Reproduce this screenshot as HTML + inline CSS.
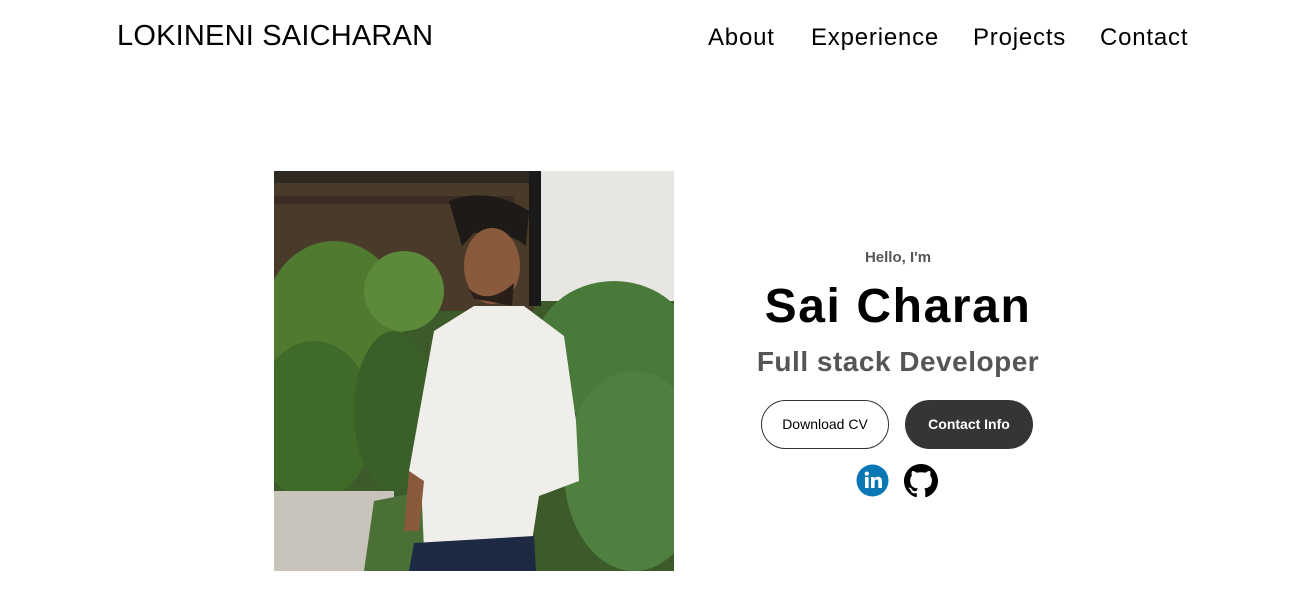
<!DOCTYPE html>
<html><head><meta charset="utf-8"><style>
*{margin:0;padding:0;box-sizing:border-box}
body{width:1313px;height:602px;background:#fff;font-family:"Liberation Sans",sans-serif;position:relative;overflow:hidden}
.logo{position:absolute;left:117px;top:20px;font-size:29px;color:#000;letter-spacing:0.2px}
.nav{position:absolute;top:24px;font-size:24px;color:#000;letter-spacing:0.8px}
.hello{position:absolute;left:0;width:1796px;top:249px;text-align:center;font-size:15px;font-weight:bold;color:#555}
.name{position:absolute;left:0;width:1796px;top:279px;text-align:center;font-size:48px;font-weight:bold;color:#000;letter-spacing:1.6px}
.role{position:absolute;left:0;width:1796px;top:346px;text-align:center;font-size:28px;font-weight:bold;color:#555;letter-spacing:0.5px}
.btn{position:absolute;top:400px;width:128px;height:49px;border-radius:25px;font-size:14px;font-weight:bold;text-align:center;line-height:49px}
</style></head><body>
<div class="logo">LOKINENI SAICHARAN</div>
<div class="nav" style="left:708px">About</div>
<div class="nav" style="left:811px">Experience</div>
<div class="nav" style="left:973px">Projects</div>
<div class="nav" style="left:1100px">Contact</div>

<svg style="position:absolute;left:274px;top:171px" width="400" height="400" viewBox="0 0 400 400">
<rect width="400" height="400" fill="#3d5a2a"/>
<rect x="0" y="0" width="260" height="140" fill="#4a3a2a"/>
<rect x="0" y="0" width="260" height="12" fill="#2e2a22"/>
<rect x="0" y="25" width="240" height="8" fill="#3a2e22"/>
<rect x="260" y="0" width="140" height="130" fill="#e8e6e2"/>
<rect x="255" y="0" width="12" height="135" fill="#1a1a1a"/>
<circle cx="73" cy="82" r="9" fill="#e9a030"/>
<ellipse cx="60" cy="150" rx="70" ry="80" fill="#4f7a30"/>
<ellipse cx="40" cy="250" rx="60" ry="80" fill="#3f6a28"/>
<ellipse cx="130" cy="120" rx="40" ry="40" fill="#5d8a3a"/>
<ellipse cx="340" cy="180" rx="80" ry="70" fill="#4a7a3a"/>
<ellipse cx="360" cy="300" rx="70" ry="100" fill="#4f8040"/>
<ellipse cx="120" cy="240" rx="40" ry="80" fill="#3a5f28"/>
<rect x="0" y="320" width="120" height="80" fill="#c8c4bc"/>
<path d="M100 330 L150 320 L150 400 L90 400Z" fill="#4a7035"/>
<path d="M175 30 Q215 15 255 40 L252 75 Q235 60 200 62 L188 75Z" fill="#1e1a18"/>
<ellipse cx="218" cy="95" rx="28" ry="38" fill="#8a5a3c"/>
<path d="M195 118 Q215 135 240 112 L238 135 Q215 130 200 128Z" fill="#2a1e18"/>
<path d="M160 160 L200 135 L250 135 L290 165 L302 250 L305 310 L265 325 L258 370 L150 378 L147 310 L135 300 Z" fill="#f0eeea"/>
<path d="M135 300 L150 310 L145 360 L130 360Z" fill="#8a5a3c"/>
<path d="M140 372 L260 365 L262 400 L135 400Z" fill="#1e2a44"/>
</svg>

<div class="hello">Hello, I'm</div>
<div class="name">Sai Charan</div>
<div class="role">Full stack Developer</div>
<div class="btn" style="left:761px;border:1px solid #333;color:#000;font-weight:normal;line-height:47px">Download CV</div>
<div class="btn" style="left:905px;background:#353535;color:#fff">Contact Info</div>

<svg style="position:absolute;left:856px;top:464px" width="33" height="33" viewBox="0 0 33 33">
<circle cx="16.5" cy="16.5" r="16" fill="#0a77b5"/>
<rect x="9" y="13" width="3.6" height="11" fill="#fff"/>
<circle cx="10.8" cy="9.6" r="2.1" fill="#fff"/>
<path d="M15 13h3.4v1.6c.7-1.2 2-1.9 3.6-1.9 2.8 0 3.9 1.7 3.9 4.6V24h-3.6v-6c0-1.5-.4-2.5-1.7-2.5-1.4 0-2 1-2 2.5v6H15z" fill="#fff"/>
</svg>
<svg style="position:absolute;left:904px;top:464px" width="34" height="34" viewBox="0 0 16 16">
<path fill="#000" d="M8 0C3.58 0 0 3.58 0 8c0 3.54 2.29 6.530 5.47 7.59.4.07.55-.17.55-.38 0-.19-.01-.82-.01-1.49-2.01.37-2.530-.49-2.69-.94-.09-.23-.48-.94-.82-1.13-.28-.15-.68-.52-.01-.53.63-.01 1.08.58 1.23.82.72 1.21 1.87.87 2.33.66.07-.52.28-.87.51-1.07-1.78-.2-3.64-.89-3.64-3.95 0-.87.31-1.59.82-2.150-.08-.2-.36-1.02.08-2.12 0 0 .67-.21 2.2.82.64-.18 1.32-.27 2-.27.68 0 1.36.09 2 .27 1.53-1.04 2.2-.82 2.2-.82.44 1.1.16 1.92.08 2.12.51.56.82 1.27.82 2.15 0 3.07-1.87 3.75-3.65 3.95.29.25.54.73.54 1.48 0 1.07-.01 1.93-.01 2.2 0 .21.15.46.55.38A8.013 8.013 0 0016 8c0-4.42-3.58-8-8-8z"/>
</svg>
</body></html>
